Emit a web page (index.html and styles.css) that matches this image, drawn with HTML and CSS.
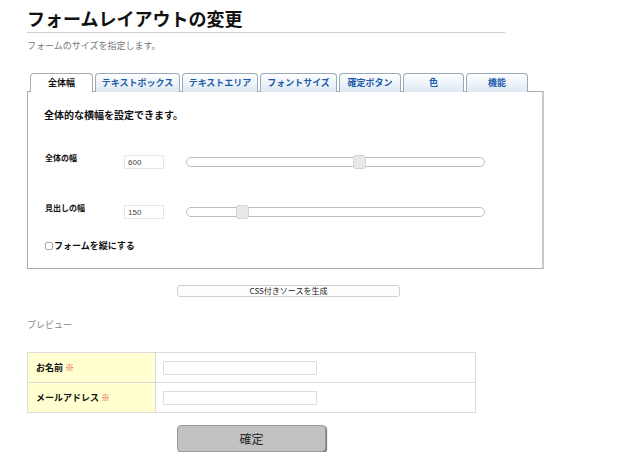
FILE: index.html
```html
<!DOCTYPE html>
<html lang="ja">
<head>
<meta charset="utf-8">
<title>フォームレイアウトの変更</title>
<link rel="stylesheet" href="styles.css">
</head>
<body>
<div class="page">
  <header class="head">
    <h1 class="title">フォームレイアウトの変更</h1>
    <p class="lead">フォームのサイズを指定します。</p>
  </header>

  <div class="tabs">
    <ul class="tablist">
      <li class="tab tab-active w63">全体幅</li>
      <li class="tab w85">テキストボックス</li>
      <li class="tab w76">テキストエリア</li>
      <li class="tab w77">フォントサイズ</li>
      <li class="tab w62">確定ボタン</li>
      <li class="tab w61">色</li>
      <li class="tab w62">機能</li>
    </ul>
    <div class="panel">
      <p class="panel-title">全体的な横幅を設定できます。</p>
      <div class="row row1">
        <span class="row-label">全体の幅</span>
        <input class="num" type="text" value="600">
        <input class="slider" type="range" min="0" max="1000" value="585">
      </div>
      <div class="row row2">
        <span class="row-label">見出しの幅</span>
        <input class="num" type="text" value="150">
        <input class="slider" type="range" min="0" max="1000" value="174">
      </div>
      <label class="check"><span class="box"></span>フォームを縦にする</label>
    </div>
  </div>

  <div class="gen-row"><button class="gen">CSS付きソースを生成</button></div>

  <p class="preview-label">プレビュー</p>

  <table class="preview">
    <tr>
      <th>お名前 <span class="req">※</span></th>
      <td><input class="field" type="text"></td>
    </tr>
    <tr>
      <th>メールアドレス <span class="req">※</span></th>
      <td><input class="field" type="text"></td>
    </tr>
  </table>

  <div class="submit-row"><button class="submit">確定</button></div>
</div>
</body>
</html>
```

FILE: styles.css
```css
* { box-sizing: border-box; }
html, body { margin: 0; padding: 0; background: #fff; }
body {
  font-family: "Noto Sans CJK JP", "Noto Sans", sans-serif;
  color: #111;
}
.page { padding-left: 27px; width: 640px; }

.head { width: 478px; }
.title {
  margin: 7px 0 0;
  font-size: 18px;
  line-height: 22px;
  font-weight: bold;
  color: #111;
  padding-bottom: 3px;
  border-bottom: 1px solid #cfcfcf;
}
.lead {
  margin: 7px 0 0;
  font-size: 9px;
  line-height: 12px;
  color: #777;
}

.tabs { margin-top: 21px; width: 517px; }
.tablist {
  list-style: none;
  margin: 0;
  padding: 0 0 0 3px;
  display: flex;
  gap: 2px;
  height: 18px;
}
.tab {
  flex: none;
  height: 19px;
  border: 1px solid #9aaabb;
  border-bottom: none;
  border-radius: 4px 4px 0 0;
  background: linear-gradient(#ffffff, #dde8f3);
  color: #1d5cab;
  font-size: 9px;
  line-height: 17px;
  font-weight: bold;
  text-align: center;
  position: relative;
  z-index: 1;
}
.tab-active {
  background: #fff;
  color: #111;
  border-color: #aaa;
  z-index: 2;
}
.w63 { width: 63px; }
.w85 { width: 85px; }
.w76 { width: 76px; }
.w77 { width: 77px; }
.w62 { width: 62px; }
.w61 { width: 61px; }

.panel {
  border: 1px solid #aaa;
  border-right: 2px solid #c8c8c8;
  height: 178px;
  padding: 16px 0 0 16px;
}
.panel-title {
  margin: 0;
  font-size: 10px;
  line-height: 14px;
  font-weight: bold;
}
.row {
  display: flex;
  align-items: flex-start;
  padding-left: 1px;
  height: 16px;
}
.row1 { margin-top: 31px; }
.row2 { margin-top: 34px; }
.row-label {
  width: 79px;
  font-size: 8px;
  line-height: 10px;
  font-weight: bold;
}
.num {
  margin: 2px 0 0;
  width: 40px;
  height: 14px;
  border: 1px solid #e6e6e6;
  padding: 0 0 0 3px;
  font-family: "Liberation Sans", sans-serif;
  font-size: 8px;
  color: #444;
  outline: none;
}
.slider {
  -webkit-appearance: none;
  appearance: none;
  margin: 2px 0 0 22px;
  width: 299px;
  height: 14px;
  background: transparent;
  padding: 0;
}
.slider::-webkit-slider-runnable-track {
  height: 10px;
  border: 1px solid #bdbdbd;
  border-radius: 5px;
  background: #fff;
}
.slider::-webkit-slider-thumb {
  -webkit-appearance: none;
  width: 13px;
  height: 14px;
  margin-top: -3px;
  border: 1px solid #d4d4d4;
  border-radius: 3px;
  background: #e8e8e8;
}
.check {
  display: flex;
  align-items: center;
  margin-top: 21px;
  padding-left: 1px;
  font-size: 9px;
  line-height: 12px;
  font-weight: bold;
}
.box {
  width: 8px;
  height: 8px;
  border: 1px solid #aaa;
  border-radius: 2px;
  background: #fff;
  margin-right: 1px;
}

.gen-row { margin-top: 16px; padding-left: 150px; }
.gen {
  display: block;
  width: 223px;
  height: 12px;
  padding: 0;
  border: 1px solid #cfcfcf;
  border-radius: 3px;
  background: #fdfdfd;
  font-family: "Noto Sans CJK JP", "Liberation Sans", sans-serif;
  font-size: 8px;
  line-height: 10px;
  color: #222;
}

.preview-label {
  margin: 22px 0 0;
  font-size: 9px;
  line-height: 12px;
  color: #888;
}

.preview {
  margin-top: 21px;
  border-collapse: collapse;
  width: 449px;
}
.preview th, .preview td {
  border: 1px solid #dcdcdc;
  height: 30px;
  padding: 0;
}
.preview th {
  width: 128px;
  background: #ffffcf;
  text-align: left;
  padding-left: 8px;
  font-size: 9px;
  font-weight: bold;
}
.req { color: #e8362a; font-weight: normal; }
.preview td { padding-left: 7px; }
.field {
  display: block;
  width: 154px;
  height: 14px;
  border: 1px solid #dedede;
  padding: 0;
  outline: none;
}

.submit-row { margin-top: 12px; padding-left: 150px; }
.submit {
  display: block;
  width: 149px;
  height: 27px;
  padding: 0;
  border: 1px solid #9a9a9a;
  border-radius: 4px;
  background: #c2c2c2;
  box-shadow: 1px 1px 1px #6f6f6f;
  font-family: "Noto Sans CJK JP", sans-serif;
  font-size: 12px;
  color: #222;
}
```
